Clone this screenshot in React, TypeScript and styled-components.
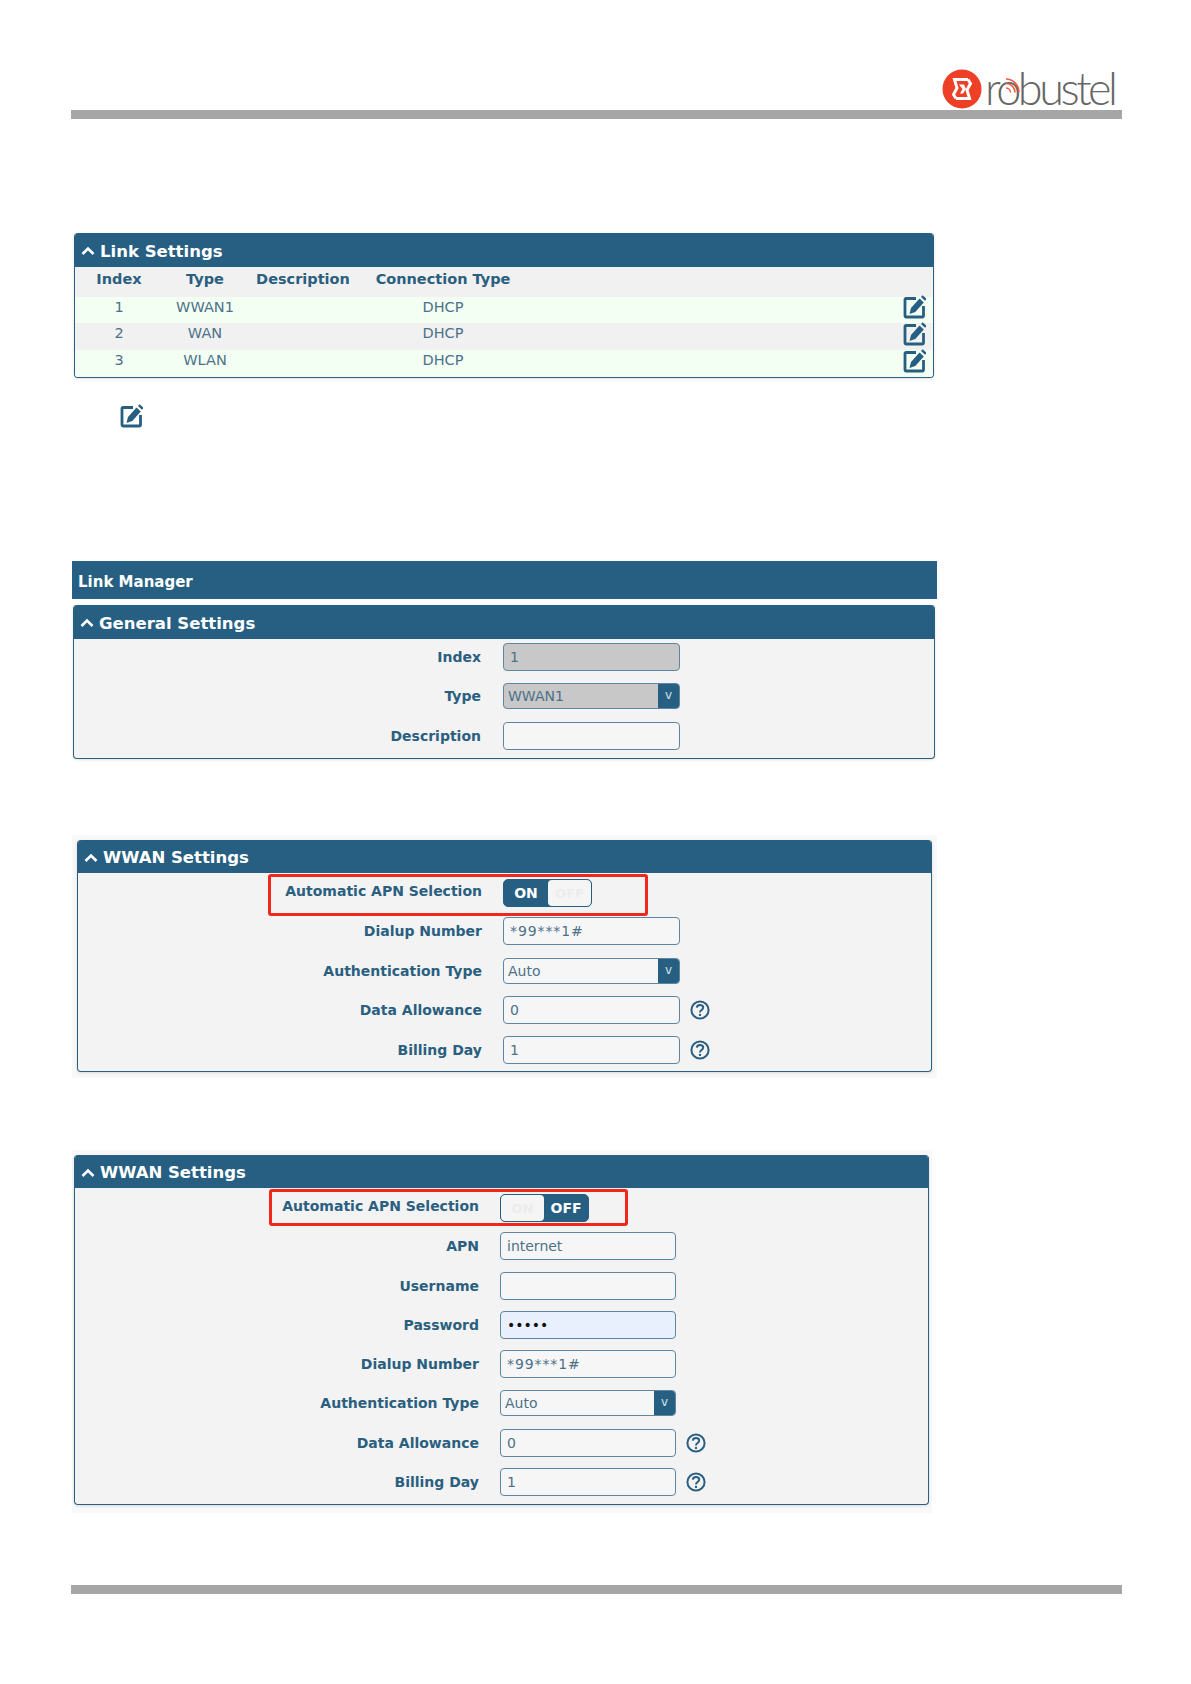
import styled, { createGlobalStyle } from "styled-components";

const GlobalStyle = createGlobalStyle`
html, body { margin: 0; padding: 0; background: #fff; }
body { font-family: "DejaVu Sans", sans-serif; color: #2a5f80; }
`;

const Page = styled.div`
width: 1191px;
height: 1684px;
overflow: hidden;
`;
const TopBar = styled.div`
height: 110px;
padding-right: 76px;
display: flex;
justify-content: flex-end;
align-items: flex-end;
box-sizing: border-box;
`;
const LogoWrap = styled.div`
display: flex;
align-items: center;
gap: 3px;
height: 44px;
margin-bottom: -1px;
`;
const LogoText = styled.span`
position: relative;
display: block;
width: 130px;
font-family: Lato, sans-serif;
font-weight: 300;
font-size: 45px;
line-height: 42px;
letter-spacing: -3.45px;
color: #666;
white-space: nowrap;
margin-bottom: 3px;
`;
const LogoWaves = styled.svg`
position: absolute;
left: 19px;
top: 10px;
`;
const Rule = styled.div<{ $top?: number }>`
height: 9px;
margin: ${(p) => p.$top ?? 0}px 69px 0 71px;
background: #a6a6a6;
`;
const Panel = styled.section<{ $top?: number; $left: number; $width: number }>`
box-sizing: border-box;
margin-top: ${(p) => p.$top ?? 0}px;
margin-left: ${(p) => p.$left}px;
width: ${(p) => p.$width}px;
background: #f3f3f3;
border: 1px solid #2a5f80;
border-top: 0;
border-radius: 4px;
box-shadow: 0 1px 3px rgba(0, 0, 0, 0.12);
overflow: hidden;
`;
const PanelHead = styled.h2<{ $h?: number }>`
box-sizing: border-box;
margin: 0;
height: ${(p) => p.$h ?? 33}px;
padding: 2px 0 0 6px;
display: flex;
align-items: center;
gap: 5px;
background: #265f82;
color: #fff;
font-size: 16.5px;
font-weight: 700;
`;
const Chevron = () => (
  <svg width="14" height="10" viewBox="0 0 14 10">
    <path d="M1.5 8 7 2.5 12.5 8" fill="none" stroke="#fff" strokeWidth="2.6" />
  </svg>
);
const TableRow = styled.div<{ $tone?: "head" | "green" | "gray"; $h: number }>`
box-sizing: border-box;
display: grid;
grid-template-columns: 88px 84px 112px 168px 1fr 24px;
align-items: center;
height: ${(p) => p.$h}px;
padding: 0 6px 7px 0;
text-align: center;
font-size: 14.5px;
font-weight: ${(p) => (p.$tone === "head" ? 700 : 400)};
color: ${(p) => (p.$tone === "head" ? "#2a5f80" : "#4d7189")};
background: ${(p) => (p.$tone === "green" ? "#f3fff3" : "#f1f1f2")};
svg {
  margin: -6px 0;
}
`;
const EditSvg = styled.svg`
display: block;
`;
const EditIcon = () => (
  <EditSvg width="23" height="25" viewBox="0 0 23 25">
    <path d="M13 4.500H3a1 1 0 0 0-1 1V22a1 1 0 0 0 1 1h16.500a1 1 0 0 0 1-1V12" fill="none" stroke="#265f82" strokeWidth="2.8" />
    <path d="M8 14 16.500 4.500l4.300 3.900-8.500 9.500-5.800 2.200z" fill="#265f82" />
    <path d="M18 3 19.600 1.200l4 3.600-1.600 1.900z" fill="#265f82" />
  </EditSvg>
);
const LoneEdit = styled.div`
margin: 25px 0 0 120px;
height: 25px;
`;
const Banner = styled.h1`
margin: 133px 0 0 72px;
width: 865px;
height: 38px;
box-sizing: border-box;
padding: 3px 0 0 6px;
display: flex;
align-items: center;
background: #265f82;
color: #fff;
font-size: 15px;
font-weight: 700;
`;
const Backdrop = styled.div<{ $top: number; $width: number; $bottom: number }>`
box-sizing: border-box;
margin: ${(p) => p.$top}px 0 0 72px;
width: ${(p) => p.$width}px;
padding: 5px 3px ${(p) => p.$bottom}px;
background: #f8f8f8;
`;
const Form = styled.div<{ $pad: number; $gap: number; $bottom: number; $field?: number }>`
--field-w: ${(p) => p.$field ?? 177}px;
display: flex;
flex-direction: column;
gap: ${(p) => p.$gap}px;
padding: ${(p) => p.$pad}px 0 ${(p) => p.$bottom}px;
`;
const Row = styled.div<{ $label: number; $gap?: number; $h?: number }>`
position: relative;
display: grid;
grid-template-columns: ${(p) => p.$label}px 1fr;
column-gap: ${(p) => p.$gap ?? 21}px;
align-items: center;
height: ${(p) => p.$h ?? 28}px;
`;
const Label = styled.label<{ $raised?: boolean }>`
text-align: right;
font-size: 14px;
font-weight: 700;
color: #2a5f80;
padding-bottom: ${(p) => (p.$raised ? 4 : 0)}px;
`;
const Cell = styled.div`
display: flex;
align-items: center;
gap: 10px;
`;
const TextInput = styled.input<{ $fill?: string; $track?: number }>`
box-sizing: border-box;
width: var(--field-w);
height: 28px;
padding: 0 6px;
border: 1.5px solid #5f86a0;
border-radius: 4px;
background: ${(p) => p.$fill ?? "#f6f6f6"};
font-family: "DejaVu Sans", sans-serif;
font-size: 14px;
letter-spacing: ${(p) => p.$track ?? 0}px;
color: #4d7189;
outline: none;
&[type="password"] {
  color: #111;
  letter-spacing: 0;
}
`;
const SelectBox = styled.div<{ $fill?: string }>`
box-sizing: border-box;
width: var(--field-w);
height: 26px;
display: flex;
border: 1.5px solid #5f86a0;
border-radius: 4px;
overflow: hidden;
background: ${(p) => p.$fill ?? "#f6f6f6"};
`;
const SelectValue = styled.span`
flex: 1;
padding-left: 4px;
font-size: 14px;
line-height: 25px;
color: #4d7189;
`;
const SelectArrow = styled.span`
width: 21px;
background: #265f82;
color: #d5e2ea;
text-align: center;
font-size: 12px;
line-height: 22px;
`;
const Switch = styled.div<{ $on: boolean }>`
box-sizing: border-box;
width: 89px;
height: 28px;
display: flex;
flex-direction: ${(p) => (p.$on ? "row" : "row-reverse")};
border: 1.5px solid #265f82;
border-radius: 5px;
background: #265f82;
overflow: hidden;
`;
const SwitchSide = styled.span`
flex: 1;
display: flex;
align-items: center;
justify-content: center;
color: #fff;
font-size: 14px;
font-weight: 700;
`;
const SwitchThumb = styled.span`
width: 43px;
display: flex;
align-items: center;
justify-content: center;
background: #f5f5f6;
border-radius: 4px;
color: #ececed;
font-size: 13px;
font-weight: 700;
`;
const Highlight = styled.div<{ $left: number; $top: number; $width: number; $h: number }>`
position: absolute;
left: ${(p) => p.$left}px;
top: ${(p) => p.$top}px;
width: ${(p) => p.$width}px;
height: ${(p) => p.$h}px;
box-sizing: border-box;
border: 3px solid #f0281c;
border-radius: 3px;
pointer-events: none;
`;
const HelpIcon = () => (
  <svg width="20" height="20" viewBox="0 0 20 20">
    <circle cx="10" cy="10" r="8.6" fill="none" stroke="#2a5f80" strokeWidth="2" />
    <path d="M6.800 7.600C7 5.800 8.300 5 10 5c1.900 0 3.200 1 3.200 2.600 0 2.400-3.200 2.400-3.200 4.800" fill="none" stroke="#2a5f80" strokeWidth="2" />
    <circle cx="10" cy="14.900" r="1.200" fill="#2a5f80" />
  </svg>
);

const links = [
  { index: "1", type: "WWAN1", tone: "green" as const, h: 26 },
  { index: "2", type: "WAN", tone: "gray" as const, h: 27 },
  { index: "3", type: "WLAN", tone: "green" as const, h: 27 },
];

function Field({ label, value, help, track }: { label: string; value: string; help?: boolean; track?: number }) {
  return (
    <Row $label={404}>
      <Label>{label}</Label>
      <Cell>
        <TextInput readOnly value={value} $track={track} />
        {help && <HelpIcon />}
      </Cell>
    </Row>
  );
}

function AuthType() {
  return (
    <Row $label={404}>
      <Label>Authentication Type</Label>
      <Cell>
        <SelectBox>
          <SelectValue>Auto</SelectValue>
          <SelectArrow>v</SelectArrow>
        </SelectBox>
      </Cell>
    </Row>
  );
}

type SwitchProps = { on: boolean; rowH: number; left: number; top: number; width: number; h: number };

function ApnSwitch({ on, rowH, left, top, width, h }: SwitchProps) {
  return (
    <Row $label={404} $h={rowH}>
      <Label $raised>Automatic APN Selection</Label>
      <Cell>
        <Switch $on={on}>
          <SwitchSide>{on ? "ON" : "OFF"}</SwitchSide>
          <SwitchThumb>{on ? "OFF" : "ON"}</SwitchThumb>
        </Switch>
      </Cell>
      <Highlight $left={left} $top={top} $width={width} $h={h} />
    </Row>
  );
}

export default function App() {
  return (
    <Page>
      <GlobalStyle />
      <TopBar>
        <LogoWrap>
          <svg width="40" height="40" viewBox="0 0 40 40">
            <circle cx="20" cy="20" r="19.500" fill="#ee3f27" />
            <path d="M26 10.500H12.500L15 19 11.500 25.500 14 29.500" fill="none" stroke="#fff" strokeWidth="3" />
            <path d="M14 29.500H27.500L25 21 28.500 14.500 26 10.500" fill="none" stroke="#fff" strokeWidth="3" />
            <path d="M17 15.500H22L24 20 21 24.500H18L20.500 20z" fill="#fff" />
          </svg>
          <LogoText>
            robustel
            <LogoWaves width="18" height="18" viewBox="0 0 18 18">
              <path d="M2 2c7 0 13 6 13 13M2 6.500c5 0 9 4 9 9M2 11c2.500 0 4.500 2 4.500 4.500" fill="none" stroke="#ef5a45" strokeWidth="1.500" />
            </LogoWaves>
          </LogoText>
        </LogoWrap>
      </TopBar>
      <Rule />

      <Panel $top={114} $left={74} $width={860}>
        <PanelHead $h={34}>
          <Chevron />
          Link Settings
        </PanelHead>
        <TableRow $tone="head" $h={30}>
          <span>Index</span>
          <span>Type</span>
          <span>Description</span>
          <span>Connection Type</span>
        </TableRow>
        {links.map((link) => (
          <TableRow key={link.index} $tone={link.tone} $h={link.h}>
            <span>{link.index}</span>
            <span>{link.type}</span>
            <span />
            <span>DHCP</span>
            <span />
            <EditIcon />
          </TableRow>
        ))}
      </Panel>
      <LoneEdit>
        <EditIcon />
      </LoneEdit>

      <Banner>Link Manager</Banner>
      <Panel $top={6} $left={73} $width={862}>
        <PanelHead $h={34}>
          <Chevron />
          General Settings
        </PanelHead>
        <Form $pad={3} $gap={11} $bottom={8}>
          <Row $label={407} $gap={22} $h={29}>
            <Label>Index</Label>
            <Cell>
              <TextInput readOnly value="1" $fill="#c8c8c8" />
            </Cell>
          </Row>
          <Row $label={407} $gap={22} $h={28}>
            <Label>Type</Label>
            <Cell>
              <SelectBox $fill="#c8c8c8">
                <SelectValue>WWAN1</SelectValue>
                <SelectArrow>v</SelectArrow>
              </SelectBox>
            </Cell>
          </Row>
          <Row $label={407} $gap={22} $h={29}>
            <Label>Description</Label>
            <Cell>
              <TextInput readOnly value="" />
            </Cell>
          </Row>
        </Form>
      </Panel>

      <Backdrop $top={76} $width={865} $bottom={6}>
        <Panel $left={2} $width={855}>
          <PanelHead>
            <Chevron />
            WWAN Settings
          </PanelHead>
          <Form $pad={6} $gap={11.75} $bottom={7}>
            <ApnSwitch on rowH={26} left={190} top={-5} width={380} h={42} />
            <Field label="Dialup Number" value="*99***1#" track={0.9} />
            <AuthType />
            <Field label="Data Allowance" value="0" help />
            <Field label="Billing Day" value="1" help />
          </Form>
        </Panel>
      </Backdrop>

      <Backdrop $top={72} $width={860} $bottom={8}>
        <Panel $left={-1} $width={855}>
          <PanelHead>
            <Chevron />
            WWAN Settings
          </PanelHead>
          <Form $pad={6} $gap={11.25} $bottom={8} $field={176}>
            <ApnSwitch on={false} rowH={27} left={194} top={-5} width={359} h={37} />
            <Field label="APN" value="internet" />
            <Field label="Username" value="" />
            <Row $label={404}>
              <Label>Password</Label>
              <Cell>
                <TextInput readOnly type="password" value="12345" $fill="#e8f0fe" />
              </Cell>
            </Row>
            <Field label="Dialup Number" value="*99***1#" track={0.9} />
            <AuthType />
            <Field label="Data Allowance" value="0" help />
            <Field label="Billing Day" value="1" help />
          </Form>
        </Panel>
      </Backdrop>

      <Rule $top={72} />
    </Page>
  );
}
